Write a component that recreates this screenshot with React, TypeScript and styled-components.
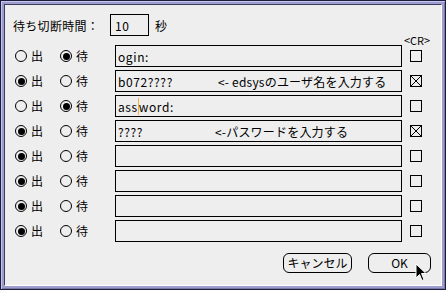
import React from "react";
import styled, { createGlobalStyle } from "styled-components";

const Global = createGlobalStyle`
  html, body { margin: 0; padding: 0; background: #eeeeee; }
  body {
    font-family: "Noto Sans CJK JP", "DejaVu Sans", sans-serif;
    font-size: 12px;
    color: #000;
  }
  * { box-sizing: border-box; }
`;

const Frame = styled.div`
  position: relative;
  width: 446px;
  height: 290px;
  border: 1px solid #1c1c3c;
  background: #9c9cce;
  padding: 3px;
  box-shadow: inset 1px 1px 0 #c4c4ec, inset -1px -1px 0 #7a7aa8;
`;

const Panel = styled.div`
  height: 100%;
  background: #eeeeee;
  border-top: 1px solid #3c3c60;
  border-left: 1px solid #3c3c60;
  border-bottom: 1px solid #ffffff;
  border-right: 1px solid #ffffff;
  display: flex;
  flex-direction: column;
`;

const Header = styled.div`
  display: flex;
  align-items: center;
  height: 22px;
  margin-top: 9px;
  padding-left: 8px;
`;

const HeaderLabel = styled.span`
  width: 97px;
  white-space: nowrap;
  letter-spacing: 0.3px;
`;

const SmallBox = styled.div`
  width: 39px;
  height: 22px;
  border: 1px solid #000;
  display: flex;
  align-items: center;
  padding-left: 4px;
  letter-spacing: 0.5px;
`;

const Unit = styled.span`
  margin-left: 6px;
`;

const CRLine = styled.div`
  height: 9px;
  display: flex;
  justify-content: flex-end;
  padding-right: 10px;
`;

const CRLabel = styled.span`
  width: 28px;
  text-align: center;
  font-size: 11px;
  line-height: 9px;
  white-space: nowrap;
`;

const Rows = styled.div`
  display: grid;
  grid-template-columns: 45px 55px 287px 28px;
  grid-auto-rows: 22px;
  row-gap: 3px;
  padding-left: 10px;
  align-items: center;
`;

const RadioItem = styled.label`
  display: flex;
  align-items: center;
  gap: 4px;
  line-height: 1;
`;

const RadioCircle = styled.span<{ $on: boolean }>`
  position: relative;
  width: 12px;
  height: 12px;
  border: 1px solid #000;
  border-radius: 50%;
  background: #eeeeee;
  &::after {
    content: "";
    position: absolute;
    inset: 1.5px;
    border-radius: 50%;
    background: ${(p) => (p.$on ? "#000" : "transparent")};
  }
`;

const Field = styled.div`
  height: 22px;
  border: 1px solid #000;
  display: flex;
  align-items: center;
  padding-left: 2px;
  white-space: pre;
  overflow: hidden;
`;

const Value = styled.span<{ $w: number }>`
  display: inline-flex;
  align-items: center;
  min-width: ${(p) => p.$w}px;
  letter-spacing: 0.6px;
`;

const Caret = styled.span`
  display: inline-block;
  width: 1px;
  height: 17px;
  background: #f4b13a;
`;

const Note = styled.span`
  letter-spacing: 0.2px;
`;

const CheckCell = styled.div`
  padding-left: 8px;
  display: flex;
  align-items: center;
`;

const CheckBox = styled.span`
  width: 12px;
  height: 12px;
  border: 1px solid #000;
  display: block;
  position: relative;
  svg { position: absolute; inset: 0; }
`;

const Buttons = styled.div`
  display: flex;
  margin-top: 11px;
  padding-left: 278px;
  gap: 16px;
`;

const Button = styled.button<{ $w: number }>`
  width: ${(p) => p.$w}px;
  height: 20px;
  border: 1px solid #000;
  border-radius: 6px;
  background: #eeeeee;
  font-family: "Noto Sans CJK JP", "DejaVu Sans", sans-serif;
  font-size: 12px;
  color: #000;
  padding: 0;
  line-height: 1;
`;

const Cursor = styled.svg`
  position: absolute;
  left: 414px;
  top: 262px;
`;

type Row = {
  out: boolean;
  text: string;
  caret?: number;
  note?: string;
  noteAt?: number;
  cr: boolean;
};

const rows: Row[] = [
  { out: false, text: "ogin:", cr: false },
  { out: true, text: "b072????", note: "<- edsysのユーザ名を入力する", noteAt: 100, cr: true },
  { out: false, text: "assword:", caret: 3, cr: false },
  { out: true, text: "????", note: "<-パスワードを入力する", noteAt: 97, cr: true },
  { out: true, text: "", cr: false },
  { out: true, text: "", cr: false },
  { out: true, text: "", cr: false },
  { out: true, text: "", cr: false },
];

function FieldContent({ row }: { row: Row }) {
  const txt =
    row.caret !== undefined ? (
      <>
        {row.text.slice(0, row.caret)}
        <Caret />
        {row.text.slice(row.caret)}
      </>
    ) : (
      row.text
    );
  return (
    <>
      <Value $w={row.noteAt ?? 0}>{txt}</Value>
      {row.note && <Note>{row.note}</Note>}
    </>
  );
}

export default function App() {
  return (
    <>
      <Global />
      <Frame>
        <Panel>
          <Header>
            <HeaderLabel>待ち切断時間：</HeaderLabel>
            <SmallBox>10</SmallBox>
            <Unit>秒</Unit>
          </Header>
          <CRLine>
            <CRLabel>&lt;CR&gt;</CRLabel>
          </CRLine>
          <Rows>
            {rows.map((r, i) => (
              <React.Fragment key={i}>
                <RadioItem>
                  <RadioCircle $on={r.out} />
                  出
                </RadioItem>
                <RadioItem>
                  <RadioCircle $on={!r.out} />
                  待
                </RadioItem>
                <Field>
                  <FieldContent row={r} />
                </Field>
                <CheckCell>
                  <CheckBox>
                    {r.cr && (
                      <svg width="10" height="10" viewBox="0 0 10 10">
                        <path d="M0 0 L10 10 M10 0 L0 10" stroke="#000" strokeWidth="1" />
                      </svg>
                    )}
                  </CheckBox>
                </CheckCell>
              </React.Fragment>
            ))}
          </Rows>
          <Buttons>
            <Button $w={69}>キャンセル</Button>
            <Button $w={63}>OK</Button>
          </Buttons>
        </Panel>
        <Cursor width="13" height="20" viewBox="0 0 13 20">
          <path
            d="M1 1 L1 15 L4.5 11.5 L7 17.5 L9 16.5 L6.5 10.5 L11 10.5 Z"
            fill="#000"
            stroke="#fff"
            strokeWidth="1"
            strokeLinejoin="miter"
          />
        </Cursor>
      </Frame>
    </>
  );
}
